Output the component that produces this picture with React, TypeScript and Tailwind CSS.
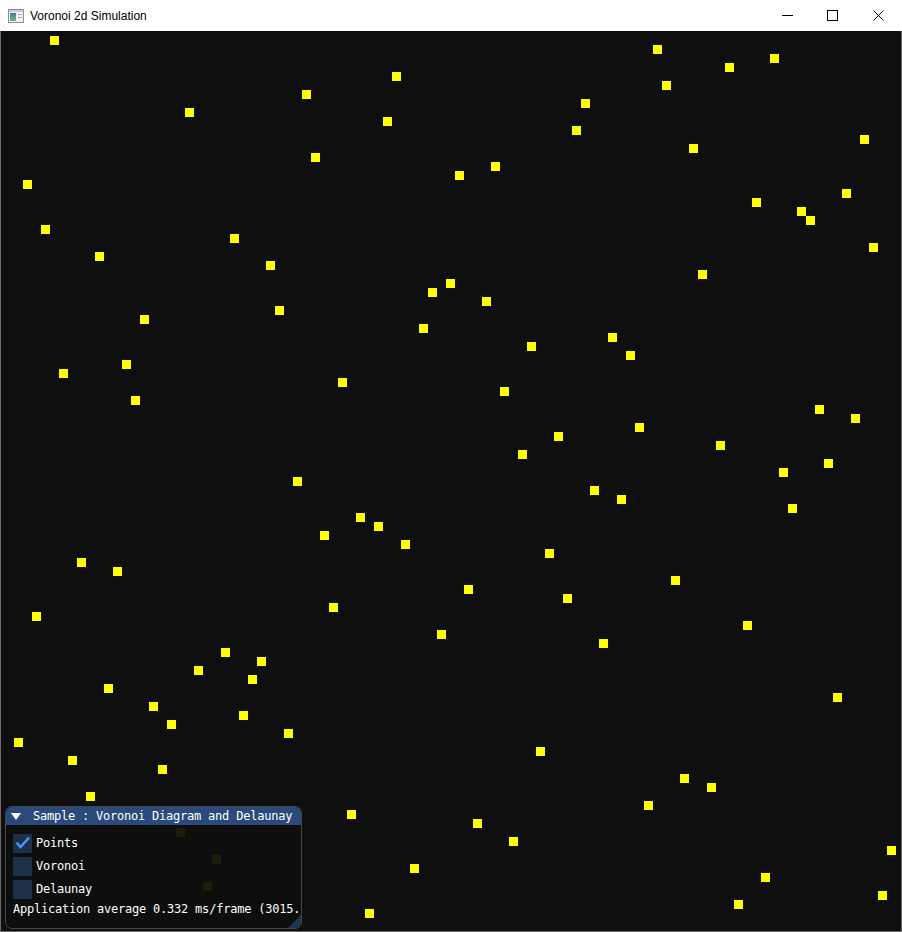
import React from "react";

// centre of each point, in page coords (every 9px step, one per row)
const POINTS: [number, number][] = [
  [54, 40], [657, 49], [774, 58], [729, 67], [396, 76], [666, 85], [306, 94], [585, 103],
  [189, 112], [387, 121], [576, 130], [864, 139], [693, 148], [315, 157], [495, 166], [459, 175],
  [27, 184], [846, 193], [756, 202], [801, 211], [810, 220], [45, 229], [234, 238], [873, 247],
  [99, 256], [270, 265], [702, 274], [450, 283], [432, 292], [486, 301], [279, 310], [144, 319],
  [423, 328], [612, 337], [531, 346], [630, 355], [126, 364], [63, 373], [342, 382], [504, 391],
  [135, 400], [819, 409], [855, 418], [639, 427], [558, 436], [720, 445], [522, 454], [828, 463],
  [783, 472], [297, 481], [594, 490], [621, 499], [792, 508], [360, 517], [378, 526], [324, 535],
  [405, 544], [549, 553], [81, 562], [117, 571], [675, 580], [468, 589], [567, 598], [333, 607],
  [36, 616], [747, 625], [441, 634], [603, 643], [225, 652], [261, 661], [198, 670], [252, 679],
  [108, 688], [837, 697], [153, 706], [243, 715], [171, 724], [288, 733], [18, 742], [540, 751],
  [72, 760], [162, 769], [684, 778], [711, 787], [90, 796], [648, 805], [351, 814], [477, 823],
  [180, 832], [513, 841], [891, 850], [216, 859], [414, 868], [765, 877], [207, 886], [882, 895],
  [738, 904], [369, 913],
];

const mono = "font-['DejaVu_Sans_Mono','Liberation_Mono',monospace] text-[12px] tracking-[-0.22px] text-white";

function Checkbox({ label, checked }: { label: string; checked?: boolean }) {
  return (
    <div className="flex items-center gap-[4px] h-[19px]">
      <div className="w-[19px] h-[19px] bg-[#1d2f49] shrink-0">
        {checked && (
          <svg width="19" height="19" viewBox="0 0 19 19">
            <polyline points="3.5,8.5 7.5,13 16,3.5" fill="none" stroke="#4296fa" strokeWidth="2.6" />
          </svg>
        )}
      </div>
      <span className={`${mono} leading-[19px]`}>{label}</span>
    </div>
  );
}

function TitleBar() {
  return (
    <div className="h-[31px] bg-white flex items-center shrink-0">
      <div className="pl-[8px] pr-[6px] flex items-center">
        <svg width="16" height="14" viewBox="0 0 16 14">
          <rect x="0.5" y="0.5" width="15" height="13" fill="#eef0f2" stroke="#8c8f94" />
          <rect x="1" y="1" width="14" height="2" fill="#c9ced4" />
          <defs>
            <linearGradient id="ic" x1="0" y1="0" x2="0" y2="1">
              <stop offset="0" stopColor="#3e7fa3" />
              <stop offset="1" stopColor="#7bb36f" />
            </linearGradient>
          </defs>
          <rect x="2" y="4" width="6" height="8" fill="url(#ic)" />
          <rect x="10" y="5" width="4" height="1" fill="#a7adb4" />
          <rect x="10" y="8" width="4" height="1" fill="#a7adb4" />
        </svg>
      </div>
      <span className="font-['Liberation_Sans','Noto_Sans',sans-serif] text-[12px] text-black">
        Voronoi 2d Simulation
      </span>
      <div className="ml-auto flex h-full">
        <div className="w-[46px] flex items-center justify-center">
          <svg width="11" height="11" viewBox="0 0 11 11">
            <line x1="0" y1="5.5" x2="11" y2="5.5" stroke="#000" strokeWidth="1" />
          </svg>
        </div>
        <div className="w-[46px] flex items-center justify-center pr-[1px]">
          <svg width="11" height="11" viewBox="0 0 11 11">
            <rect x="0.5" y="0.5" width="10" height="10" fill="none" stroke="#000" strokeWidth="1" />
          </svg>
        </div>
        <div className="w-[46px] flex items-center justify-center pr-[1px]">
          <svg width="11" height="11" viewBox="0 0 11 11">
            <path d="M0.5 0.5 L10.5 10.5 M10.5 0.5 L0.5 10.5" stroke="#000" strokeWidth="1" />
          </svg>
        </div>
      </div>
    </div>
  );
}

function ImGuiWindow() {
  return (
    <div className="absolute left-[4px] top-[775px] w-[297px] h-[123px] rounded-[7px] border border-[#45454c] bg-[rgba(15,15,15,0.94)] overflow-hidden flex flex-col">
      <div className="h-[18px] bg-[#294a7a] flex items-center shrink-0">
        <svg className="ml-[5px] mr-[12px]" width="10" height="7" viewBox="0 0 10 7">
          <polygon points="0,0 10,0 5,7" fill="#fff" />
        </svg>
        <span className={`${mono} leading-[18px] whitespace-nowrap`}>Sample : Voronoi Diagram and Delaunay</span>
      </div>
      <div className="pt-[9px] pl-[7px] flex flex-col gap-[4px]">
        <Checkbox label="Points" checked />
        <Checkbox label="Voronoi" />
        <Checkbox label="Delaunay" />
        <div className={`${mono} leading-[13px] whitespace-nowrap`}>Application average 0.332 ms/frame (3015.</div>
      </div>
      <svg className="absolute right-0 bottom-0" width="13" height="13" viewBox="0 0 13 13">
        <polygon points="13,0 13,13 0,13" fill="#1f3453" />
      </svg>
    </div>
  );
}

export default function App() {
  return (
    <div className="w-[902px] h-[932px] flex flex-col bg-[#6b6b6b] overflow-hidden">
      <TitleBar />
      <div className="flex-1 mx-[1px] mb-[1px] bg-[#0f0f0f] relative overflow-hidden">
        {POINTS.map(([x, y], i) => (
          <div
            key={i}
            className="absolute w-[9px] h-[9px] bg-[#ffff00]"
            style={{ left: x - 5, top: y - 35 }}
          />
        ))}
        <ImGuiWindow />
      </div>
    </div>
  );
}
